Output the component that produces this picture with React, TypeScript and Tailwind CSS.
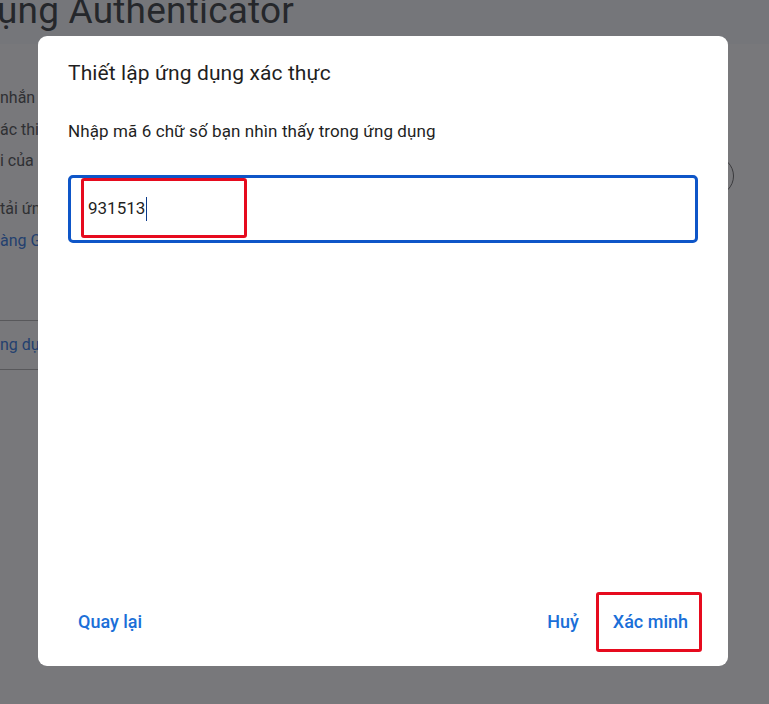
import React from "react";

export default function App() {
  const font = { fontFamily: "Roboto, 'Noto Sans', Arial, sans-serif" };
  return (
    <div
      className="relative w-[769px] h-[704px] overflow-hidden bg-[#78787b]"
      style={font}
    >
      {/* dimmed page underneath */}
      <div className="flex flex-col w-full h-full">
        <div className="h-[44px] bg-[#75767a] flex items-start overflow-hidden">
          <div className="ml-[-3px] mt-[-10px] text-[37px] leading-[42px] text-[#25272b] whitespace-nowrap tracking-[0.2px]">
            ụng Authenticator
          </div>
        </div>
        <div className="flex justify-between">
          <div className="flex flex-col text-[16px] text-[#2f3033] whitespace-nowrap pt-[38px]">
            <div className="leading-[31.5px]">nhắn tin văn bản hoặc cuộc gọi thoại</div>
            <div className="leading-[31.5px]">ác thiết bị của bạn</div>
            <div className="leading-[31.5px]">i của bạn</div>
            <div className="leading-[32px] mt-[16px]">tải ứng dụng Google Authenticator từ</div>
            <div className="leading-[32px] text-[#23406f]">àng Google Play</div>
            <div className="mt-[63px] w-[60px] border-t border-[#58585b]" />
            <div className="leading-[48px] text-[#23406f]">ng dụng xác thực</div>
            <div className="w-[60px] border-t border-[#58585b]" />
          </div>
          <div className="mt-[112px] mr-[35px] w-[40px] h-[40px] rounded-full border border-[#3a3a3d]" />
        </div>
      </div>

      {/* dialog */}
      <div className="absolute left-[38px] top-[36px] w-[690px] h-[630px] rounded-[9px] bg-white flex flex-col px-[30px] pt-[23px] pb-[25px]">
        <div className="text-[21px] leading-[28px] text-[#1f1f1f] tracking-[0.1px]">
          Thiết lập ứng dụng xác thực
        </div>
        <div className="mt-[32px] text-[17px] leading-[24px] text-[#1f1f1f] tracking-[0.1px]">
          Nhập mã 6 chữ số bạn nhìn thấy trong ứng dụng
        </div>
        <div className="relative mt-[32px] h-[68px] w-[630px] rounded-[5px] border-[3px] border-[#0e56c8] flex items-center pl-[17px]">
          <span className="text-[17px] text-[#1f1f1f]">931513</span>
          <span className="ml-[1px] w-[1px] h-[24px] bg-[#0b3a8a]" />
          <div className="absolute left-[10px] top-[0px] w-[166px] h-[60px] rounded-[3px] border-[3px] border-[#e60b1e]" />
        </div>
        <div className="flex-1" />
        <div className="flex items-center justify-between h-[40px]">
          <button className="px-[10px] h-[40px] text-[18px] font-medium text-[#1b6fd8]">
            Quay lại
          </button>
          <div className="flex items-center gap-[14px]">
            <button className="px-[10px] h-[40px] text-[18px] font-medium text-[#1b6fd8]">
              Huỷ
            </button>
            <div className="relative">
              <button className="px-[10px] h-[40px] text-[18px] font-medium text-[#1b6fd8]">
                Xác minh
              </button>
              <div className="absolute left-[-7px] right-[-4px] top-[-9px] bottom-[-11px] rounded-[3px] border-[3px] border-[#e60b1e]" />
            </div>
          </div>
        </div>
      </div>
    </div>
  );
}
